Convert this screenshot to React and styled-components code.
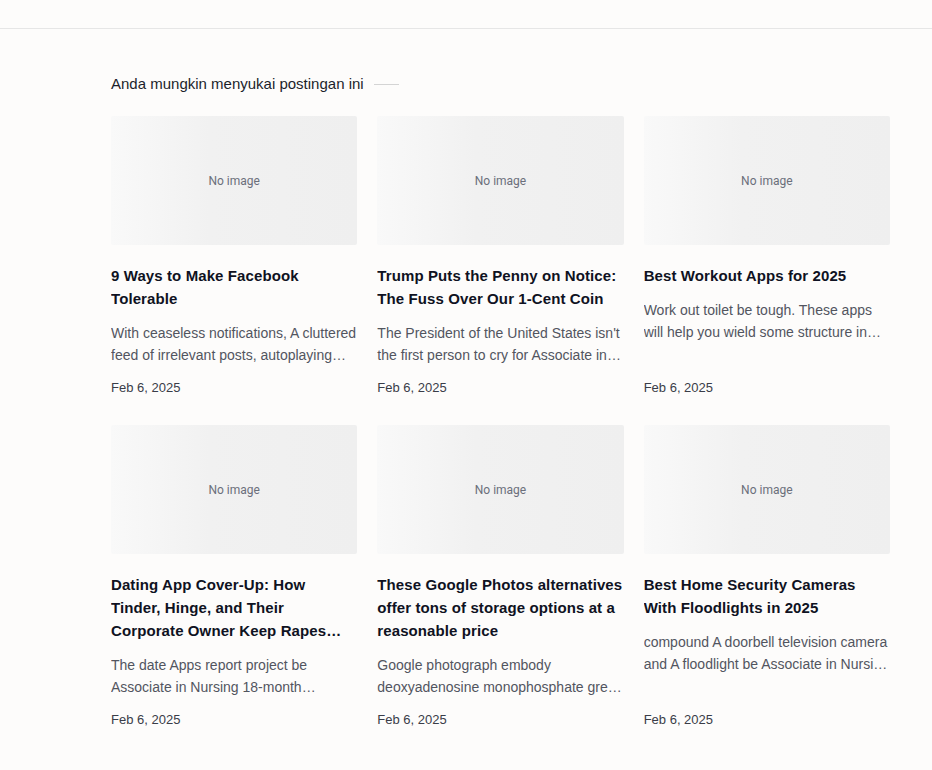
import React from "react";
import styled, { createGlobalStyle } from "styled-components";

const GlobalStyle = createGlobalStyle`
  body {
    margin: 0;
    background: #fdfcfb;
    font-family: "Liberation Sans", Arial, sans-serif;
  }
`;

const TopBar = styled.div`
  height: 28px;
  border-bottom: 1px solid #e6e6e6;
`;

const Section = styled.section`
  width: 779px;
  margin-left: 111px;
  padding-top: 45px;
`;

const Heading = styled.h3`
  display: flex;
  align-items: center;
  gap: 10px;
  margin: 0 0 22px;
  font-size: 15px;
  font-weight: 400;
  line-height: 20px;
  color: #1c1f2b;

  &::after {
    content: "";
    width: 25px;
    height: 1px;
    background: #d4d4d4;
  }
`;

const Grid = styled.div`
  display: grid;
  grid-template-columns: repeat(3, 1fr);
  column-gap: 20px;
  row-gap: 27px;
`;

const Card = styled.article`
  display: flex;
  flex-direction: column;
  min-width: 0;
`;

const Thumb = styled.div`
  height: 129px;
  border-radius: 2px;
  background: linear-gradient(90deg, #f9f9f9 0%, #f1f1f1 40%, #efefef 100%);
  display: flex;
  align-items: center;
  justify-content: center;
  font-family: Roboto, "Liberation Sans", sans-serif;
  font-size: 12px;
  color: #6b6f7b;
`;

const Title = styled.h4`
  margin: 19px 0 13px;
  font-size: 15px;
  font-weight: 700;
  line-height: 23px;
  letter-spacing: 0.1px;
  color: #0f1222;
  display: -webkit-box;
  -webkit-line-clamp: 3;
  -webkit-box-orient: vertical;
  overflow: hidden;
`;

const Excerpt = styled.p`
  margin: 0 0 12px;
  font-size: 14px;
  line-height: 21.5px;
  color: #52555f;
  display: -webkit-box;
  -webkit-line-clamp: 2;
  -webkit-box-orient: vertical;
  overflow: hidden;
`;

const DateText = styled.time`
  margin-top: auto;
  font-size: 13px;
  line-height: 20px;
  color: #3a3d48;
`;

const posts = [
  {
    title: "9 Ways to Make Facebook Tolerable",
    excerpt:
      "With ceaseless notifications, A cluttered feed of irrelevant posts, autoplaying videos and more",
  },
  {
    title: "Trump Puts the Penny on Notice: The Fuss Over Our 1-Cent Coin",
    excerpt:
      "The President of the United States isn't the first person to cry for Associate in Nursing end",
  },
  {
    title: "Best Workout Apps for 2025",
    excerpt:
      "Work out toilet be tough. These apps will help you wield some structure in your routine",
  },
  {
    title:
      "Dating App Cover-Up: How Tinder, Hinge, and Their Corporate Owner Keep Rapes Under Wraps",
    excerpt:
      "The date Apps report project be Associate in Nursing 18-month investigation into online dating",
  },
  {
    title:
      "These Google Photos alternatives offer tons of storage options at a reasonable price",
    excerpt:
      "Google photograph embody deoxyadenosine monophosphate great service for storing photos",
  },
  {
    title: "Best Home Security Cameras With Floodlights in 2025",
    excerpt:
      "compound A doorbell television camera and A floodlight be Associate in Nursing excellent choice",
  },
];

export default function App() {
  return (
    <>
      <GlobalStyle />
      <TopBar />
      <Section>
        <Heading>Anda mungkin menyukai postingan ini</Heading>
        <Grid>
          {posts.map((p) => (
            <Card key={p.title}>
              <Thumb>No image</Thumb>
              <Title>{p.title}</Title>
              <Excerpt>{p.excerpt}</Excerpt>
              <DateText>Feb 6, 2025</DateText>
            </Card>
          ))}
        </Grid>
      </Section>
    </>
  );
}
